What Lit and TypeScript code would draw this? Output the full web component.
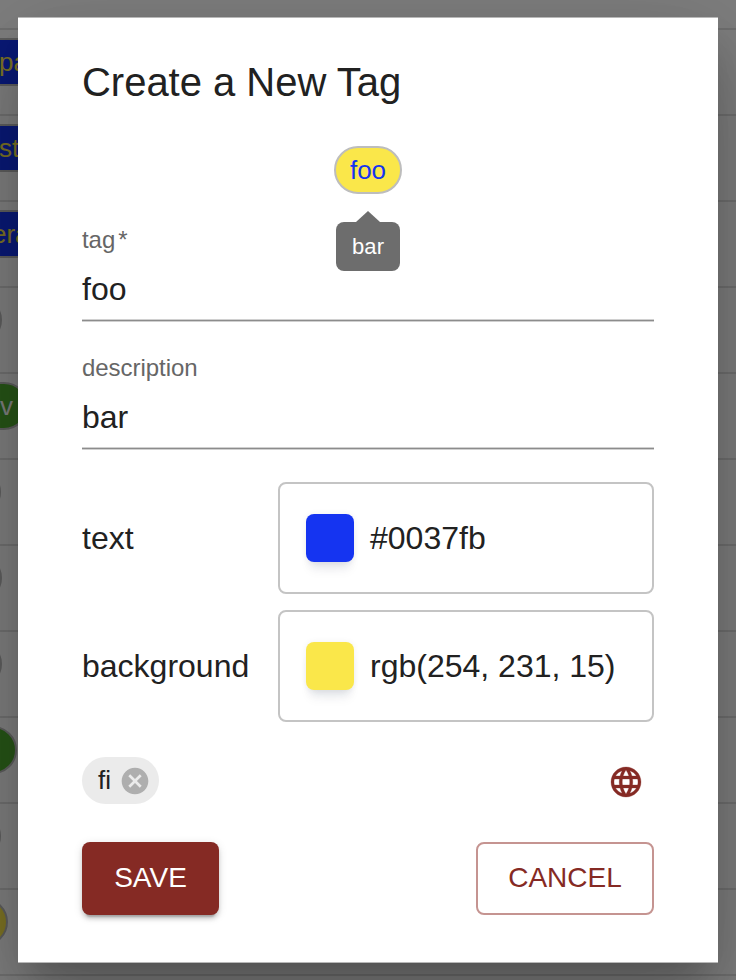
import { LitElement, html, css, svg } from "lit";
import { customElement } from "lit/decorators.js";
import { classMap } from "lit/directives/class-map.js";

interface Row {
  text: string;
  kind: "blue" | "plain" | "green" | "yellow";
  edge: number;
  inset?: number;
}

const rows: Row[] = [
  { text: "pa", kind: "blue", edge: 60, inset: 57 },
  { text: "st", kind: "blue", edge: 60, inset: 57 },
  { text: "era", kind: "blue", edge: 60, inset: 50 },
  { text: "", kind: "plain", edge: 2 },
  { text: "v", kind: "green", edge: 28, inset: 90 },
  { text: "", kind: "plain", edge: 1 },
  { text: "", kind: "plain", edge: 2 },
  { text: "", kind: "plain", edge: 2 },
  { text: "", kind: "green", edge: 17 },
  { text: "", kind: "plain", edge: 1 },
  { text: "", kind: "yellow", edge: 8 },
  { text: "", kind: "plain", edge: -10 },
];

@customElement("tag-table")
class TagTable extends LitElement {
  static styles = css`
    :host { display: block; padding-top: 28px; box-sizing: border-box; height: 980px; overflow: hidden; background: #fff; }
    .row { height: 86px; box-sizing: border-box; border-top: 2px solid #e0e0e0; padding-top: 8px; overflow: hidden; }
    .tag {
      box-sizing: border-box; height: 48px; width: 120px; border: 2px solid #bdbdbd; border-radius: 24px;
      display: flex; align-items: center; font-size: 26px; white-space: pre;
    }
    .plain { background: #fff; }
    .green { background: #50ac30; color: #fff; }
    .yellow { background: #fae74a; }
    .blue { background: #1534f1; color: #fae74a; border-radius: 0; }
  `;
  render() {
    return rows.map(
      (r) => html`<div class="row">
        <div class=${classMap({ tag: true, [r.kind]: true })} style="margin-left:${r.edge - 120}px;padding-left:${r.inset ?? 0}px">${r.text}</div>
      </div>`
    );
  }
}

@customElement("text-field")
class TextField extends LitElement {
  static properties = { label: {}, value: {}, required: { type: Boolean } };
  declare label: string;
  declare value: string;
  declare required: boolean;
  static styles = css`
    :host { display: block; height: 94px; }
    .label { height: 28px; line-height: 28px; font-size: 24px; color: #666; letter-spacing: -0.05px; }
    .value { height: 65px; line-height: 70px; font-size: 32px; color: #212121; }
    .line { height: 3px; background: linear-gradient(#d0d0d0 0 1px, #8c8c8c 1px 2px, #d0d0d0 2px 3px); }
    .star { margin-left: 3px; }
  `;
  render() {
    return html`<div class="label">${this.label}${this.required ? html`<span class="star">*</span>` : ""}</div>
      <div class="value">${this.value}</div>
      <div class="line"></div>`;
  }
}

@customElement("color-field")
class ColorField extends LitElement {
  static properties = { label: {}, value: {}, color: {} };
  declare label: string;
  declare value: string;
  declare color: string;
  static styles = css`
    :host { display: flex; align-items: center; height: 112px; font-size: 32px; color: #212121; }
    .label { width: 196px; }
    .box { flex: 1; box-sizing: border-box; height: 112px; border: 2px solid #c4c4c4; border-radius: 8px;
      display: flex; align-items: center; padding-left: 26px; gap: 16px; white-space: pre; }
    .swatch { width: 48px; height: 48px; border-radius: 8px;
      box-shadow: 0 12px 12px -4px rgba(24, 39, 75, 0.06), 0 8px 8px -4px rgba(24, 39, 75, 0.08), 0 0 6px rgba(0, 0, 0, 0.06); }
  `;
  render() {
    return html`<div class="label">${this.label}</div>
      <div class="box"><div class="swatch" style="background:${this.color}"></div><span>${this.value}</span></div>`;
  }
}

const closeIcon = svg`<path fill="#aeaeae" d="M12 2C6.47 2 2 6.47 2 12s4.47 10 10 10 10-4.47 10-10S17.53 2 12 2zm5 13.59L15.59 17 12 13.41 8.41 17 7 15.59 10.59 12 7 8.41 8.41 7 12 10.59 15.59 7 17 8.41 13.41 12 17 15.59z"/>`;
const globeIcon = svg`<path fill="#852a24" stroke="#852a24" stroke-width="0.2" d="M11.99 2C6.47 2 2 6.48 2 12s4.47 10 9.99 10C17.52 22 22 17.52 22 12S17.52 2 11.99 2zm6.93 6h-2.95c-.32-1.25-.78-2.45-1.38-3.56 1.84.63 3.37 1.91 4.33 3.56zM12 4.04c.83 1.2 1.48 2.53 1.91 3.96h-3.82c.43-1.43 1.08-2.76 1.91-3.96zM4.26 14C4.1 13.36 4 12.69 4 12s.1-1.36.26-2h3.38c-.08.66-.14 1.32-.14 2s.06 1.34.14 2H4.26zm.82 2h2.95c.32 1.25.78 2.45 1.38 3.56-1.84-.63-3.37-1.9-4.33-3.56zm2.95-8H5.08c.96-1.66 2.49-2.93 4.33-3.56C8.81 5.55 8.35 6.75 8.03 8zM12 19.96c-.83-1.2-1.48-2.53-1.91-3.96h3.82c-.43 1.43-1.08 2.76-1.91 3.96zM14.34 14H9.66c-.09-.66-.16-1.32-.16-2s.07-1.35.16-2h4.68c.09.65.16 1.32.16 2s-.07 1.34-.16 2zm.25 5.56c.6-1.11 1.06-2.31 1.38-3.56h2.95c-.96 1.65-2.49 2.93-4.33 3.56zM16.36 14c.08-.66.14-1.32.14-2s-.06-1.34-.14-2h3.38c.16.64.26 1.31.26 2s-.1 1.36-.26 2h-3.38z"/>`;

@customElement("app-root")
class AppRoot extends LitElement {
  static styles = css`
    :host { display: block; position: relative; width: 736px; height: 980px; overflow: hidden;
      font-family: "Liberation Sans", Arial, sans-serif; }
    .scrim { position: absolute; inset: 0; background: rgba(0, 0, 0, 0.5); display: flex; justify-content: center; padding-top: 17px; }
    .dialog { box-sizing: border-box; width: 700px; height: 946px; background: #fff; padding: 0 64px;
      box-shadow: 0 22px 30px -14px rgba(0, 0, 0, 0.2), 0 48px 76px 6px rgba(0, 0, 0, 0.14), 0 18px 92px 16px rgba(0, 0, 0, 0.12);
      border-top: 1px solid #b8b8b8; border-bottom: 1px solid #b8b8b8; }
    .title { margin: 0; height: 128px; line-height: 129px; font-weight: 400; font-size: 40px; letter-spacing: -0.02px; color: #212121; white-space: nowrap; }
    .preview { height: 80px; display: flex; flex-direction: column; align-items: center; position: relative; }
    .chip { box-sizing: border-box; width: 68px; height: 48px; border: 2px solid #bdbdbd; border-radius: 24px;
      background: #fae74a; color: #1534f1; font-size: 26px; display: flex; align-items: center; justify-content: center; }
    .tip { position: absolute; top: 65px; width: 64px; display: flex; flex-direction: column; align-items: center; }
    .arrow { width: 24px; height: 11px; background: #6d6d6d; clip-path: polygon(50% 0, 100% 100%, 0 100%); }
    .bubble { width: 64px; height: 49px; border-radius: 8px; background: #6d6d6d; color: #fff; font-size: 22px;
      display: flex; align-items: center; justify-content: center; letter-spacing: 0.15px; }
    .fields { display: flex; flex-direction: column; gap: 34px; }
    .colors { margin-top: 34px; display: flex; flex-direction: column; gap: 16px; }
    .tools { margin-top: 35px; height: 47px; display: flex; justify-content: space-between; align-items: center; }
    .small { box-sizing: border-box; width: 77px; height: 47px; border-radius: 24px; background: #ebebeb; color: #212121;
      display: flex; align-items: center; font-size: 26px; padding-left: 16px; gap: 8px; }
    .x { width: 32px; height: 32px; display: block; }
    .globe { width: 36px; height: 36px; margin: 2px 10px 0 0; display: block; }
    .actions { margin-top: 38px; display: flex; justify-content: space-between; }
    .btn { box-sizing: border-box; height: 73px; border-radius: 8px; font: 28px "Liberation Sans", Arial, sans-serif; padding: 0 0 1px; }
    .save { width: 137px; border: 0; background: #852a24; color: #fff;
      box-shadow: 0 6px 2px -4px rgba(0, 0, 0, 0.2), 0 4px 4px 0 rgba(0, 0, 0, 0.14), 0 2px 10px 0 rgba(0, 0, 0, 0.12); }
    .cancel { width: 178px; border: 2px solid #c59491; background: #fff; color: #852a24; }
  `;
  render() {
    return html`
      <tag-table></tag-table>
      <div class="scrim">
        <div class="dialog">
          <h1 class="title">Create a New Tag</h1>
          <div class="preview">
            <div class="chip">foo</div>
            <div class="tip"><div class="arrow"></div><div class="bubble">bar</div></div>
          </div>
          <div class="fields">
            <text-field label="tag" value="foo" required></text-field>
            <text-field label="description" value="bar"></text-field>
          </div>
          <div class="colors">
            <color-field label="text" value="#0037fb" color="#1534f1"></color-field>
            <color-field label="background" value="rgb(254, 231, 15)" color="#fae74a"></color-field>
          </div>
          <div class="tools">
            <div class="small"><span>fi</span><svg class="x" viewBox="0 0 24 24">${closeIcon}</svg></div>
            <svg class="globe" viewBox="0 0 24 24">${globeIcon}</svg>
          </div>
          <div class="actions">
            <button class="btn save">SAVE</button>
            <button class="btn cancel">CANCEL</button>
          </div>
        </div>
      </div>`;
  }
}
